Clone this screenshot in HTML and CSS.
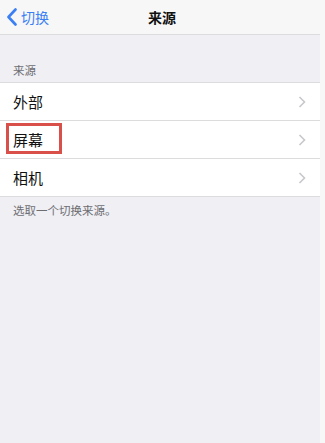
FILE: index.html
```html
<!DOCTYPE html>
<html lang="zh">
<head>
<meta charset="utf-8">
<link rel="stylesheet" href="styles.css">
</head>
<body>
<div class="screen">
  <header class="nav">
    <div class="back">
      <svg class="back-icon" width="12" height="18" viewBox="0 0 12 18"><path d="M9.5 1.5 L2.5 9 L9.5 16.5" fill="none" stroke="#3b7ff5" stroke-width="2.6" stroke-linecap="round" stroke-linejoin="round"/></svg>
      <span>切换</span>
    </div>
    <div class="title">来源</div>
  </header>
  <div class="section-header">来源</div>
  <ul class="list">
    <li class="row"><span>外部</span><svg class="chev" width="8" height="12" viewBox="0 0 8 12"><path d="M1.5 1 L6.5 6 L1.5 11" fill="none" stroke="#c7c7cc" stroke-width="1.6"/></svg></li>
    <li class="row"><span>屏幕</span><svg class="chev" width="8" height="12" viewBox="0 0 8 12"><path d="M1.5 1 L6.5 6 L1.5 11" fill="none" stroke="#c7c7cc" stroke-width="1.6"/></svg><div class="highlight"></div></li>
    <li class="row"><span>相机</span><svg class="chev" width="8" height="12" viewBox="0 0 8 12"><path d="M1.5 1 L6.5 6 L1.5 11" fill="none" stroke="#c7c7cc" stroke-width="1.6"/></svg></li>
  </ul>
  <div class="footer">选取一个切换来源。</div>
</div>
</body>
</html>
```
FILE: styles.css
```css
html, body {
  margin: 0;
  padding: 0;
}
body {
  background: #f7f7f8;
  font-family: "Noto Sans CJK SC", "Noto Sans", sans-serif;
}
.screen {
  width: 320px;
  min-height: 443px;
  background: #efeff4;
}
.nav {
  height: 34px;
  background: #f7f7f7;
  border-bottom: 1px solid #dcdcdf;
  display: flex;
  align-items: center;
  position: relative;
}
.back {
  display: flex;
  align-items: center;
  padding-left: 6px;
  color: #3b7ff5;
  font-size: 14px;
  gap: 3px;
  line-height: 1;
}
.back-icon {
  display: block;
}
.title {
  position: absolute;
  left: 0;
  right: 0;
  text-align: center;
  font-size: 14px;
  font-weight: bold;
  color: #111;
  pointer-events: none;
  padding-left: 4px;
}
.section-header {
  padding: 28px 13px 5px;
  font-size: 11.5px;
  line-height: 14px;
  color: #6d6d72;
}
.list {
  list-style: none;
  margin: 0;
  padding: 0;
  background: #fff;
  border-top: 1px solid #dcdcdf;
}
.row {
  height: 37px;
  border-bottom: 1px solid #dcdcdf;
  display: flex;
  align-items: center;
  justify-content: space-between;
  padding: 0 14px 0 13px;
  font-size: 15px;
  color: #111;
  position: relative;
}
.chev {
  display: block;
}
.highlight {
  position: absolute;
  left: 6px;
  top: 2px;
  width: 50px;
  height: 25px;
  border: 3px solid #d9504a;
}
.footer {
  padding: 6px 13px 0;
  font-size: 11.5px;
  line-height: 14px;
  color: #6d6d72;
}
```
